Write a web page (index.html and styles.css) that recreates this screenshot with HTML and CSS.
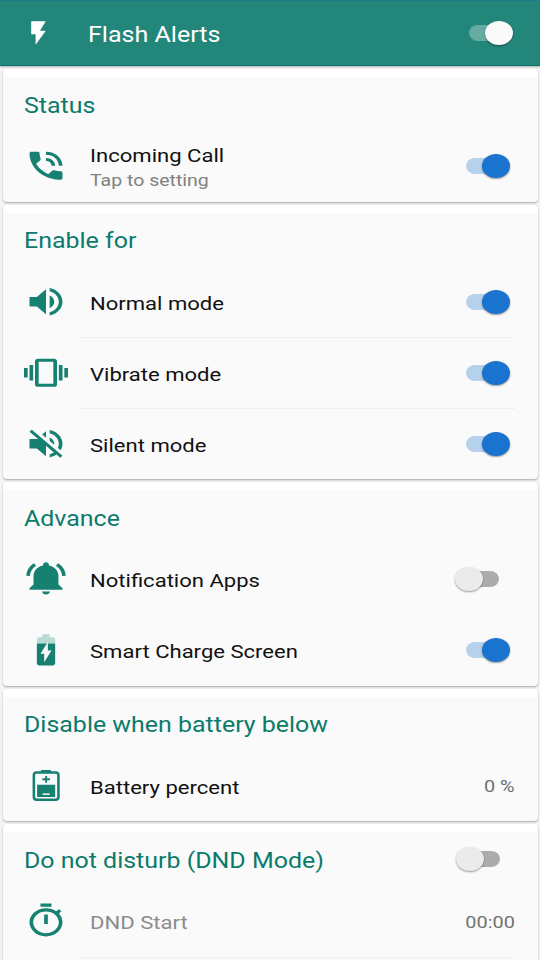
FILE: index.html
```html
<!DOCTYPE html>
<html lang="en">
<head>
<meta charset="utf-8">
<title>Flash Alerts</title>
<link rel="stylesheet" href="styles.css">
</head>
<body>
<header class="bar">
  <svg class="flash" viewBox="0 0 24 24" preserveAspectRatio="none"><path d="M7 2v11h3v9l7-12h-4l4-8z"/></svg>
  <h1 class="bar-title"><span class="wide">Flash Alerts</span></h1>
  <span class="switch light"></span>
</header>
<main class="list">
  <section class="card">
    <div class="head"><h2><span class="wide">Status</span></h2></div>
    <div class="row">
      <svg class="icon" viewBox="0 0 24 24" preserveAspectRatio="none"><path d="M20 15.5c-1.25 0-2.45-.2-3.57-.57-.35-.11-.74-.03-1.02.24l-2.2 2.2c-2.83-1.44-5.15-3.75-6.59-6.59l2.2-2.21c.28-.26.36-.65.25-1C8.7 6.45 8.5 5.25 8.5 4c0-.55-.45-1-1-1H4c-.55 0-1 .45-1 1 0 9.39 7.61 17 17 17 .55 0 1-.45 1-1v-3.5c0-.55-.45-1-1-1zM19 12h2c0-4.97-4.03-9-9-9v2c3.87 0 7 3.13 7 7zm-4 0h2c0-2.76-2.24-5-5-5v2c1.66 0 3 1.34 3 3z"/></svg>
      <div class="label two"><span class="wide">Incoming Call</span><small class="wide">Tap to setting</small></div>
      <span class="switch on"></span>
    </div>
  </section>

  <section class="card">
    <div class="head"><h2><span class="wide">Enable for</span></h2></div>
    <div class="row line">
      <svg class="icon" viewBox="0 0 24 24" preserveAspectRatio="none"><path d="M3 9v6h4l5 5V4L7 9H3zm13.500 3c0-1.770-1.020-3.290-2.500-4.030v8.050c1.480-.730 2.500-2.250 2.500-4.020zM14 3.230v2.060c2.890.860 5 3.540 5 6.710s-2.110 5.850-5 6.710v2.060c4.010-.910 7-4.490 7-8.770s-2.990-7.860-7-8.770z"/></svg>
      <div class="label"><span class="wide">Normal mode</span></div>
      <span class="switch on"></span>
    </div>
    <div class="row line">
      <svg class="icon" viewBox="0 0 24 24" preserveAspectRatio="none"><path d="M0 15h2V9H0v6zm3 2h2V7H3v10zm19-8v6h2V9h-2zm-3 8h2V7h-2v10zM16.500 3h-9C6.670 3 6 3.670 6 4.500v15c0 .830.670 1.500 1.500 1.500h9c.830 0 1.500-.670 1.500-1.500v-15c0-.830-.670-1.500-1.500-1.500zM16 19H8V5h8v14z"/></svg>
      <div class="label"><span class="wide">Vibrate mode</span></div>
      <span class="switch on"></span>
    </div>
    <div class="row">
      <svg class="icon" viewBox="0 0 24 24" preserveAspectRatio="none"><path d="M16.500 12c0-1.770-1.020-3.290-2.500-4.030v2.210l2.450 2.450c.030-.200.050-.410.050-.630zm2.500 0c0 .940-.200 1.820-.540 2.640l1.510 1.510C20.630 14.910 21 13.500 21 12c0-4.280-2.990-7.860-7-8.770v2.060c2.890.860 5 3.540 5 6.710zM4.270 3L3 4.270 7.730 9H3v6h4l5 5v-6.730l4.250 4.250c-.670.520-1.420.930-2.250 1.180v2.060c1.380-.310 2.630-.950 3.690-1.810L19.730 21 21 19.730l-9-9L4.270 3zM12 4L9.910 6.090 12 8.180V4z"/></svg>
      <div class="label"><span class="wide">Silent mode</span></div>
      <span class="switch on"></span>
    </div>
  </section>

  <section class="card">
    <div class="head"><h2><span class="wide">Advance</span></h2></div>
    <div class="row">
      <svg class="icon" viewBox="0 0 24 24" preserveAspectRatio="none"><path d="M12 1.500c-.900 0-1.600.700-1.600 1.600v.400C7.200 4.200 5.200 6.900 5.200 10.500v5.200L3 18v1.100h18V18l-2.200-2.300v-5.200c0-3.600-2-6.300-5.200-7v-.400c0-.900-.700-1.600-1.600-1.600zM9.800 20.200h4.400c-.200 1.200-1.100 1.900-2.200 1.900s-2-.700-2.200-1.900z"/><path class="stroke" d="M2.200 10.200C2.400 7.100 3.700 4.600 6 2.900M21.800 10.200c-.200-3.100-1.500-5.600-3.800-7.300"/></svg>
      <div class="label"><span class="wide">Notification Apps</span></div>
      <span class="switch off"></span>
    </div>
    <div class="row">
      <svg class="icon" viewBox="0 0 24 24" preserveAspectRatio="none"><path class="pale" d="M17 5.330C17 4.600 16.400 4 15.670 4H14V2h-4v2H8.330C7.600 4 7 4.600 7 5.330V8h5.470L13 7v1h4V5.330z"/><path d="M13 12.500h2L11 20v-5.500H9L12.470 8H7v12.670C7 21.400 7.600 22 8.330 22h7.330c.740 0 1.340-.600 1.340-1.330V8h-4v4.500z"/></svg>
      <div class="label"><span class="wide">Smart Charge Screen</span></div>
      <span class="switch on"></span>
    </div>
  </section>

  <section class="card">
    <div class="head"><h2><span class="wide">Disable when battery below</span></h2></div>
    <div class="row">
      <svg class="icon" viewBox="0 0 44 38"><rect class="outline" x="9.700" y="5.600" width="24.900" height="27.600" rx="2.800"/><path d="M17 3h10v3H17zM13 18h18.300v12.500H13z"/><path d="M21.200 9h1.900v2.500H26v1.900h-2.900v2.500h-1.900v-2.500h-2.900v-1.900h2.900z"/><path class="paper" d="M18.500 26.800h7.300v1.500h-7.300z"/></svg>
      <div class="label"><span class="wide">Battery percent</span></div>
      <span class="value"><span class="wide">0 %</span></span>
    </div>
  </section>

  <section class="card last">
    <div class="head"><h2><span class="wide">Do not disturb (DND Mode)</span></h2><span class="switch off"></span></div>
    <div class="row line">
      <svg class="icon" viewBox="0 0 24 24" preserveAspectRatio="none"><path d="M15 1H9v2h6V1zm-4 13h2V8h-2v6zm8.030-6.610l1.420-1.420c-.430-.510-.900-.990-1.410-1.410l-1.420 1.420C16.070 4.740 14.120 4 12 4c-4.970 0-9 4.030-9 9s4.020 9 9 9 9-4.030 9-9c0-2.120-.740-4.070-1.970-5.610zM12 20c-3.870 0-7-3.130-7-7s3.130-7 7-7 7 3.130 7 7-3.130 7-7 7z"/></svg>
      <div class="label muted"><span class="wide">DND Start</span></div>
      <span class="value"><span class="wide">00:00</span></span>
    </div>
  </section>
</main>
</body>
</html>
```
FILE: styles.css
```css
* { box-sizing: border-box; }
body {
  display: flex;
  flex-direction: column;
  margin: 0;
  height: 960px;
  overflow: hidden;
  background: #f5f5f5;
  font-family: Roboto, "Liberation Sans", sans-serif;
  color: #111;
}
.bar {
  flex: none;
  display: flex;
  align-items: center;
  height: 66px;
  padding: 0 27px 0 20.500px;
  background: #22867a;
  border-top: 1px solid #23788a;
  border-bottom: 1px solid #067468;
  box-shadow: 0 1px 2px rgba(0, 0, 0, .3);
}
.flash { width: 35px; height: 28px; fill: #fff; }
.bar-title {
  flex: 1;
  margin: 2px 0 0 32.500px;
  font-size: 21.700px;
  font-weight: 400;
  color: #fff;
}
.wide {
  display: inline-block;
  white-space: nowrap;
  transform: scaleX(1.155);
  transform-origin: left center;
}
.list {
  flex: 1;
  display: flex;
  flex-direction: column;
  gap: 3px;
  padding: 3px 2.500px 0;
}
.card {
  flex: none;
  padding: 0 1px;
  border-top: 8px solid #fff;
  border-radius: 4px;
  background: #fafafa;
  box-shadow: 0 1px 2px rgba(0, 0, 0, .32);
}
.last { flex: 1; border-radius: 4px 4px 0 0; }
.head {
  display: flex;
  align-items: center;
  height: 53.500px;
  padding: 0 21px 0 20px;
}
.head h2 {
  flex: 1;
  margin: 3.500px 0 0;
  font-size: 21.600px;
  font-weight: 400;
  line-height: 26px;
  color: #0c7a6b;
}
.row {
  display: flex;
  align-items: center;
  position: relative;
  height: 71px;
  padding: 0 21.500px 0 20px;
}
.line::after {
  content: "";
  position: absolute;
  left: 76.500px;
  right: 21.500px;
  bottom: -1px;
  height: 1px;
  background: #efefef;
}
.icon { width: 44px; height: 37.500px; fill: #168071; }
.stroke { fill: none; stroke: #168071; stroke-width: 2; }
.outline { fill: none; stroke: #168071; stroke-width: 2.600; }
.pale { fill: #b9dad5; }
.paper { fill: #fafafa; }
.label {
  flex: 1;
  margin: 4.500px 0 0 22.300px;
  font-size: 19.100px;
  line-height: 24px;
}
.two { display: flex; flex-direction: column; align-items: flex-start; }
.two small { font-size: 16.900px; color: #808080; }
.muted { color: #8c8c8c; }
.value { margin-top: 1px; font-size: 17.200px; color: #707070; }
.value .wide { transform-origin: right center; }
.switch { position: relative; width: 44px; height: 24px; margin-right: 5px; }
.switch::before {
  content: "";
  position: absolute;
  left: 0;
  top: 4px;
  width: 40px;
  height: 16px;
  border-radius: 9px / 8px;
  background: #b6d1ec;
}
.switch::after {
  content: "";
  position: absolute;
  left: 16px;
  top: 0;
  width: 28px;
  height: 24px;
  border-radius: 50%;
  background: #1a73cf;
  box-shadow: 0 1px 2px rgba(0, 0, 0, .4);
}
.light { margin-right: 0; }
.light::before { background: #66aca3; }
.light::after { background: #fafafa; }
.off { margin-right: 16px; }
.off::before { left: 4px; background: #acacac; }
.off::after { left: 0; background: #ebebeb; }
```
